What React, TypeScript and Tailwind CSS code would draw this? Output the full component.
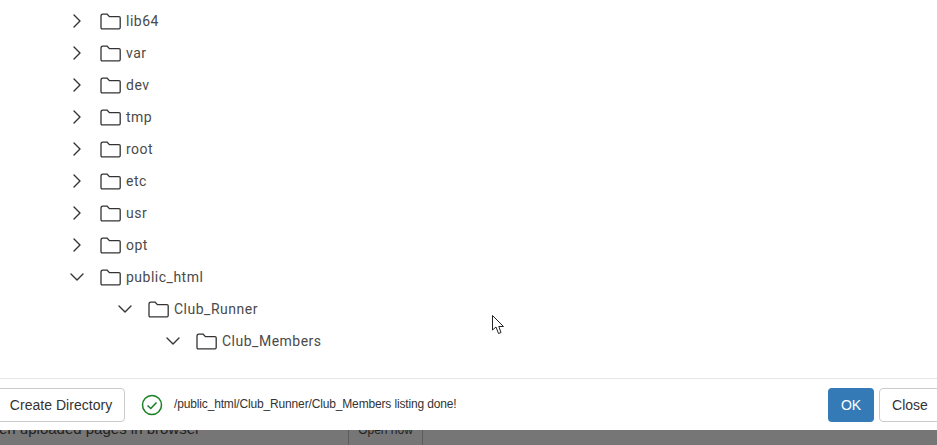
import { ChevronDown, ChevronRight } from "lucide-react";

const closedDirs = ["lib64", "var", "dev", "tmp", "root", "etc", "usr", "opt"];

function FolderIcon() {
  return (
    <svg width="21" height="17" viewBox="0 0 21 17" fill="none" stroke="#333" strokeWidth="1.3" strokeLinejoin="round">
      <path d="M1 3.2C1 2 1.6 1.2 2.8 1.2H7.2L9.4 3.6H19C19.7 3.6 20.2 4.1 20.2 4.8V14.6C20.2 15.4 19.7 15.9 19 15.9H2.2C1.5 15.9 1 15.4 1 14.6Z" />
    </svg>
  );
}

function TreeRow({ name, open, indent }: { name: string; open?: boolean; indent: string }) {
  return (
    <div className={`flex h-8 items-center ${indent}`}>
      <span className="flex w-[32px] shrink-0 items-center text-[#333]">
        {open ? (
          <ChevronDown className="ml-[-3px] shrink-0" size={24} strokeWidth={1.4} />
        ) : (
          <ChevronRight className="ml-[-3px] shrink-0" size={24} strokeWidth={1.4} />
        )}
      </span>
      <FolderIcon />
      <span className="ml-[5px] text-sm tracking-[0.5px] text-[#4a4a4a]">{name}</span>
    </div>
  );
}

function Cursor() {
  return (
    <svg className="absolute left-[492px] top-[315px]" width="13" height="20" viewBox="0 0 13 20" fill="#fff" stroke="#222" strokeWidth="1">
      <path d="M0.5 0.5V15L4 12L6.5 18.5L9 17.5L6.8 11.5H11.5Z" />
    </svg>
  );
}

export default function App() {
  return (
    <div className="relative flex h-[445px] w-[937px] flex-col overflow-hidden bg-white font-['Roboto',sans-serif]">
      <div className="h-[378px] shrink-0 pt-[5px] pl-[68px]">
        {closedDirs.map((d) => (
          <TreeRow key={d} name={d} indent="" />
        ))}
        <TreeRow name="public_html" open indent="" />
        <TreeRow name="Club_Runner" open indent="pl-12" />
        <TreeRow name="Club_Members" open indent="pl-24" />
      </div>

      <div className="flex h-[52px] shrink-0 items-center border-t border-[#e5e5e5] font-['Liberation_Sans',sans-serif]">
        <button className="ml-[-20px] h-[34px] w-[145px] rounded border border-[#ccc] bg-white pl-[17px] text-sm tracking-[0.03px] text-[#333]">
          Create Directory
        </button>
        <svg className="ml-4" width="22" height="22" viewBox="0 0 22 22" fill="none" stroke="#1a7f26" strokeWidth="1.5">
          <circle cx="11" cy="11" r="9.5" />
          <path d="M6.5 11.5L9.8 14.5L15.5 8.5" strokeWidth="1.6" />
        </svg>
        <span className="ml-[11px] mt-[-2px] text-xs tracking-[-0.15px] text-[#333]">/public_html/Club_Runner/Club_Members listing done!</span>
        <div className="ml-auto flex gap-[5px]">
          <button className="h-[34px] w-[46px] rounded bg-[#337ab7] text-sm text-white">OK</button>
          <button className="mr-[-10px] h-[34px] w-[68px] rounded border border-[#ccc] bg-white pr-[6px] text-sm text-[#333]">
            Close
          </button>
        </div>
      </div>

      <div className="relative flex min-h-0 flex-1 overflow-hidden bg-[#767676] font-['Liberation_Sans',sans-serif] text-[15px] text-[#222]">
        <span className="ml-[-21px] mt-[-12px] w-[369px] shrink-0 whitespace-nowrap">Open uploaded pages in browser</span>
        <span className="h-full w-[75px] shrink-0 border-x border-[#5c5c5c] text-center text-xs leading-[0px]">
          <span className="relative top-0">Open now</span>
        </span>
      </div>

      <Cursor />
    </div>
  );
}
